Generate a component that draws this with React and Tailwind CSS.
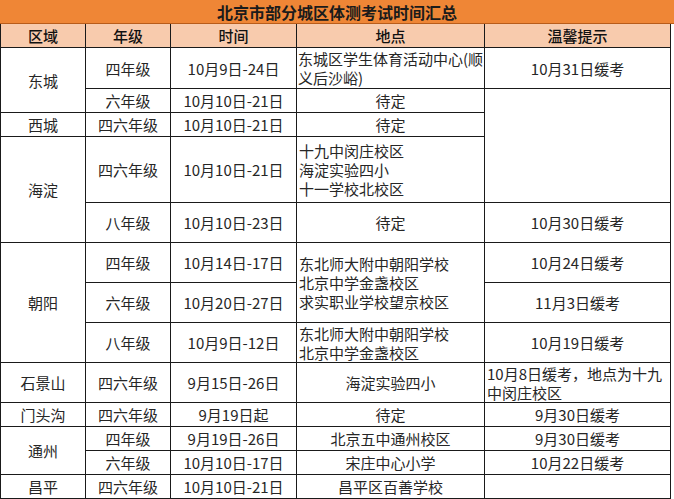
import React from 'react'

const cell = 'border-r border-b border-[#1a1a1a] flex items-center justify-center text-center'
const left = 'border-r border-b border-[#1a1a1a] flex items-center justify-start text-left px-[2px]'
const head = 'border-r border-b border-[#1a1a1a] bg-[#f8cbad] flex items-center justify-center font-medium text-[#111]'

const Lines = ({ items }) => (
  <div className="leading-[19px] whitespace-nowrap">
    {items.map((t) => (
      <div key={t}>{t}</div>
    ))}
  </div>
)

export default function App() {
  return (
    <div
      className="w-[674px] h-[499px] bg-white text-[15px] text-[#262626] overflow-hidden"
      style={{ fontFamily: '"Noto Sans CJK SC", "Noto Sans", sans-serif' }}
    >
      {/* title bar */}
      <div className="h-[24px] bg-[#ef8636] border-b border-[#b85c1a] flex items-center justify-center text-[16px] font-bold text-[#1b1b1b] leading-none">
        北京市部分城区体测考试时间汇总
      </div>

      {/* table */}
      <div className="grid w-[671px] border-l border-[#1a1a1a] grid-cols-[85px_85px_126px_188px_186px] grid-rows-[24px_41px_24px_24px_66px_40px_40px_40px_40px_40px_24px_24px_24px_24px] leading-[19px]">
        <div className={head}>区域</div>
        <div className={head}>年级</div>
        <div className={head}>时间</div>
        <div className={head}>地点</div>
        <div className={head}>温馨提示</div>

        {/* 东城 */}
        <div className={`${cell} row-span-2`}>东城</div>
        <div className={cell}>四年级</div>
        <div className={cell}>10月9日-24日</div>
        <div className={`${left} pl-[1px] pr-0`}>
          <Lines items={['东城区学生体育活动中心(顺', '义后沙峪)']} />
        </div>
        <div className={cell}>10月31日缓考</div>

        <div className={cell}>六年级</div>
        <div className={cell}>10月10日-21日</div>
        <div className={cell}>待定</div>
        <div className={`${cell} row-span-3`}></div>

        {/* 西城 */}
        <div className={cell}>西城</div>
        <div className={cell}>四六年级</div>
        <div className={cell}>10月10日-21日</div>
        <div className={cell}>待定</div>

        {/* 海淀 */}
        <div className={`${cell} row-span-2`}>海淀</div>
        <div className={cell}>四六年级</div>
        <div className={cell}>10月10日-21日</div>
        <div className={left}>
          <Lines items={['十九中闵庄校区', '海淀实验四小', '十一学校北校区']} />
        </div>

        <div className={cell}>八年级</div>
        <div className={cell}>10月10日-23日</div>
        <div className={cell}>待定</div>
        <div className={cell}>10月30日缓考</div>

        {/* 朝阳 */}
        <div className={`${cell} row-span-3`}>朝阳</div>
        <div className={cell}>四年级</div>
        <div className={cell}>10月14日-17日</div>
        <div className={`${left} row-span-2`}>
          <Lines items={['东北师大附中朝阳学校', '北京中学金盏校区', '求实职业学校望京校区']} />
        </div>
        <div className={cell}>10月24日缓考</div>

        <div className={cell}>六年级</div>
        <div className={cell}>10月20日-27日</div>
        <div className={cell}>11月3日缓考</div>

        <div className={cell}>八年级</div>
        <div className={cell}>10月9日-12日</div>
        <div className={left}>
          <Lines items={['东北师大附中朝阳学校', '北京中学金盏校区']} />
        </div>
        <div className={cell}>10月19日缓考</div>

        {/* 石景山 */}
        <div className={cell}>石景山</div>
        <div className={cell}>四六年级</div>
        <div className={cell}>9月15日-26日</div>
        <div className={cell}>海淀实验四小</div>
        <div className={left}>10月8日缓考，地点为十九中闵庄校区</div>

        {/* 门头沟 */}
        <div className={cell}>门头沟</div>
        <div className={cell}>四六年级</div>
        <div className={cell}>9月19日起</div>
        <div className={cell}>待定</div>
        <div className={cell}>9月30日缓考</div>

        {/* 通州 */}
        <div className={`${cell} row-span-2`}>通州</div>
        <div className={cell}>四年级</div>
        <div className={cell}>9月19日-26日</div>
        <div className={cell}>北京五中通州校区</div>
        <div className={cell}>9月30日缓考</div>

        <div className={cell}>六年级</div>
        <div className={cell}>10月10日-17日</div>
        <div className={cell}>宋庄中心小学</div>
        <div className={cell}>10月22日缓考</div>

        {/* 昌平 */}
        <div className={cell}>昌平</div>
        <div className={cell}>四六年级</div>
        <div className={cell}>10月10日-21日</div>
        <div className={cell}>昌平区百善学校</div>
        <div className={cell}></div>
      </div>
    </div>
  )
}
